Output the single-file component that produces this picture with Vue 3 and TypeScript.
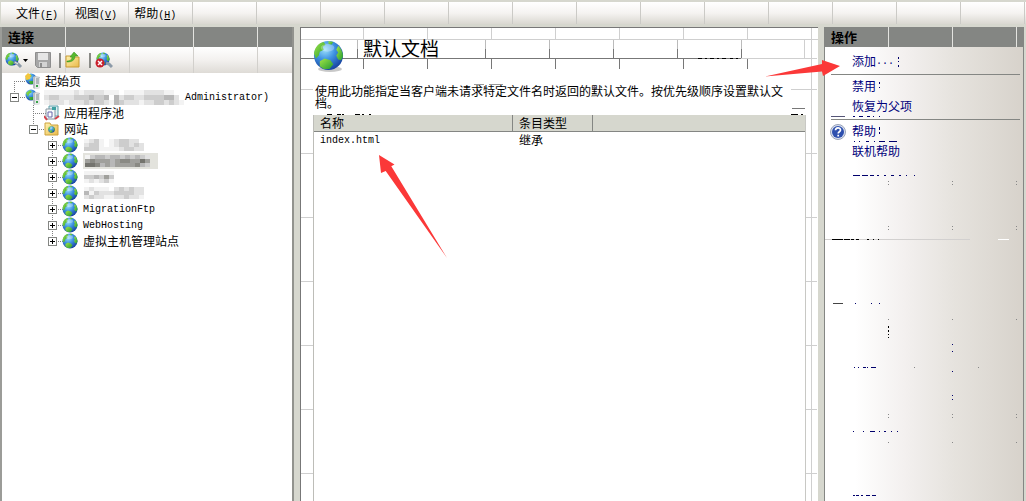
<script setup lang="ts">
interface Menu { label: string; key: string }
interface Site { name: string; mosaic: string[]; selected?: boolean }
interface Dash { x: number; y: number; w: number; h?: number; tone?: string }

const menus: Menu[] = [
  { label: '文件', key: 'F' },
  { label: '视图', key: 'V' },
  { label: '帮助', key: 'H' },
]

/* Each digit is the darkness of one 5px cell of a redacted name. */
const serverMosaic = [
  '1111112122221110111122221100',
  '2332223334334042332233334420',
  '1222122232332143222122332321',
]

const sites: Site[] = [
  { name: '', mosaic: ['123101233220', '233101233232', '333111123322'] },
  { name: '', selected: true, mosaic: ['1344344343432', '5655545665575', '7764545555643'] },
  { name: '', mosaic: ['111111', '334353', '121231'] },
  { name: '', mosaic: ['121110232322', '413222333322', '232211223221'] },
  { name: 'MigrationFtp', mosaic: [] },
  { name: 'WebHosting', mosaic: [] },
  { name: '虚拟主机管理站点', mosaic: [] },
]

const tones = ['#ffffff', '#f3f3f3', '#e2e2e2', '#cdcdcd', '#b8b8b8', '#a0a09c', '#8a8a84', '#74746e']

const centerTicks = [89, 153, 217, 281, 345, 409, 473]
const topTicks = [62, 126, 190, 254, 318, 382, 446]
const boxTicks = [56, 184, 248, 312, 376, 440]

const centerDashes: Dash[] = [
  { x: 397, y: 30, w: 4 }, { x: 404, y: 30, w: 2 }, { x: 409, y: 30, w: 4 }, { x: 416, y: 30, w: 2 },
  { x: 421, y: 30, w: 4 }, { x: 429, y: 30, w: 3 }, { x: 435, y: 30, w: 2 },
  { x: 26, y: 86, w: 5 }, { x: 36, y: 86, w: 4 }, { x: 41, y: 86, w: 2 }, { x: 54, y: 86, w: 5 },
  { x: 61, y: 86, w: 2 }, { x: 68, y: 86, w: 2 }, { x: 490, y: 86, w: 7 }, { x: 500, y: 86, w: 2 },
  { x: 173, y: 56, w: 10, tone: '#999' }, { x: 188, y: 56, w: 14, tone: '#999' },
]

const actionDashes: Dash[] = [
  { x: 73, y: 10, w: 1, h: 2 }, { x: 73, y: 14, w: 1, h: 1 }, { x: 73, y: 18, w: 1, h: 2 },
  { x: 54, y: 35, w: 1, h: 2 }, { x: 54, y: 40, w: 1, h: 1 },
  { x: 54, y: 80, w: 1, h: 3 }, { x: 54, y: 85, w: 1, h: 2 },
  { x: 6, y: 69, w: 14, tone: '#557' }, { x: 28, y: 69, w: 2 }, { x: 34, y: 69, w: 4 }, { x: 42, y: 69, w: 3 },
  { x: 48, y: 69, w: 1 }, { x: 54, y: 69, w: 1 },
  { x: 29, y: 94, w: 1 }, { x: 34, y: 94, w: 1 }, { x: 41, y: 94, w: 3 }, { x: 49, y: 94, w: 1 },
  { x: 54, y: 94, w: 6 }, { x: 64, y: 94, w: 8 },
  { x: 28, y: 128, w: 7 }, { x: 37, y: 128, w: 6 }, { x: 45, y: 128, w: 4 }, { x: 52, y: 128, w: 2 },
  { x: 59, y: 128, w: 2 }, { x: 66, y: 128, w: 3 }, { x: 74, y: 128, w: 2 }, { x: 81, y: 128, w: 1 }, { x: 89, y: 128, w: 1 },
  { x: 7, y: 192, w: 11, tone: '#000' }, { x: 19, y: 192, w: 6, tone: '#000' }, { x: 26, y: 192, w: 3, tone: '#000' },
  { x: 31, y: 192, w: 3, tone: '#000' }, { x: 42, y: 192, w: 2, tone: '#000' }, { x: 48, y: 192, w: 1, tone: '#000' }, { x: 53, y: 192, w: 1, tone: '#000' },
  { x: 173, y: 192, w: 11, tone: '#fff' },
  { x: 8, y: 256, w: 10, tone: '#444' }, { x: 30, y: 256, w: 1 }, { x: 46, y: 256, w: 1 }, { x: 54, y: 256, w: 1 },
  { x: 63, y: 279, w: 1, h: 2, tone: '#000' }, { x: 63, y: 283, w: 1, h: 2, tone: '#000' }, { x: 63, y: 287, w: 1, h: 1, tone: '#000' }, { x: 63, y: 290, w: 1, h: 1, tone: '#000' },
  { x: 127, y: 297, w: 1 }, { x: 127, y: 304, w: 1 }, { x: 127, y: 324, w: 1 }, { x: 127, y: 348, w: 1 }, { x: 127, y: 352, w: 1 },
  { x: 29, y: 320, w: 1 }, { x: 33, y: 320, w: 1 }, { x: 38, y: 320, w: 3 }, { x: 42, y: 320, w: 1 }, { x: 46, y: 320, w: 5 },
  { x: 89, y: 320, w: 1, tone: '#888' }, { x: 153, y: 320, w: 1, tone: '#888' },
  { x: 28, y: 384, w: 1 }, { x: 38, y: 384, w: 1 }, { x: 45, y: 384, w: 5 }, { x: 54, y: 384, w: 1 }, { x: 59, y: 384, w: 2 }, { x: 66, y: 384, w: 1 }, { x: 72, y: 384, w: 1 },
  { x: 28, y: 448, w: 2 }, { x: 31, y: 448, w: 3 }, { x: 36, y: 448, w: 2 }, { x: 41, y: 448, w: 4 }, { x: 47, y: 448, w: 4 },
]
const speckColumns = [63, 127, 191]
const speckRows = [134, 137, 179, 182, 272, 367, 370, 395]
</script>

<template>
  <div class="app">
    <svg class="defs" width="0" height="0" aria-hidden="true">
      <defs>
        <radialGradient id="sea" cx="38%" cy="30%" r="75%">
          <stop offset="0" stop-color="#9be0fc" />
          <stop offset="0.45" stop-color="#3f93e2" />
          <stop offset="1" stop-color="#143c9c" />
        </radialGradient>
        <linearGradient id="land" x1="0" y1="0" x2="1" y2="1">
          <stop offset="0" stop-color="#a4e646" />
          <stop offset="1" stop-color="#219a32" />
        </linearGradient>
        <linearGradient id="folder" x1="0" y1="0" x2="1" y2="1">
          <stop offset="0" stop-color="#fff3b0" />
          <stop offset="1" stop-color="#e9b94a" />
        </linearGradient>
        <symbol id="globe" viewBox="0 0 32 32">
          <circle cx="16" cy="16" r="15" fill="url(#sea)" />
          <path d="M1 14C2 7 6 3 11 2l2 3-3 2 1 3-4 2-1 4-3 3z" fill="url(#land)" />
          <path d="M16 1l5 1-2 3-3-1z" fill="url(#land)" />
          <path d="M26 6c3 3 5 7 5 11l-2 4-3-1-2-4 2-3-2-3z" fill="url(#land)" />
          <path d="M7 22l5-3 6 2 3 4-4 5-6 0-4-3z" fill="url(#land)" />
          <ellipse cx="15" cy="8" rx="7" ry="4" fill="#fff" opacity="0.28" />
        </symbol>
        <symbol id="server" viewBox="0 0 16 16">
          <circle cx="6" cy="6" r="5.5" fill="url(#sea)" />
          <path d="M1 4l4-3 2 2-3 2-1 3z M4 8l4 0 0 3-3 0z" fill="url(#land)" />
          <path d="M8 4l2-1 5 1v11l-5 1-2-1z" fill="#b9c0c4" />
          <path d="M10 4l5 1v10l-5 1z" fill="#e5e8e8" />
          <path d="M11 6h3M11 8h3M11 10h3" stroke="#7d898f" />
          <path d="M11 13h2" stroke="#39a34a" stroke-width="2" />
        </symbol>
      </defs>
    </svg>

    <nav class="menubar" aria-label="主菜单">
      <button v-for="m in menus" :key="m.key" type="button">{{ m.label }}<span class="latin">(<u>{{ m.key }}</u>)</span></button>
    </nav>

    <div class="main">
      <section class="connections">
        <h2 class="bar">连接</h2>
        <div class="toolbar">
          <button type="button" class="tool wide" aria-label="连接">
            <svg width="24" height="18" viewBox="0 0 24 18">
              <use href="#globe" x="0" y="1" width="14" height="14" />
              <path d="M9 11l4 2 3 3" stroke="#8c9aa8" stroke-width="3" fill="none" />
              <path d="M10 11l3 2" stroke="#dfe6ec" fill="none" />
              <path d="M18 8h5l-2.5 3z" fill="#000" />
            </svg>
          </button>
          <button type="button" class="tool" aria-label="保存">
            <svg width="16" height="16" viewBox="0 0 16 16">
              <path d="M0.500 0.500h15v15h-13l-2-2z" fill="#a6a6a6" stroke="#8e8e8e" />
              <path d="M3 1h10v7H3z" fill="#e6e6e6" />
              <path d="M4 10h8v5H4z" fill="#d4d4d4" />
              <path d="M5 11h2v4H5z" fill="#8e8e8e" />
            </svg>
          </button>
          <i class="sep" />
          <button type="button" class="tool" aria-label="上移">
            <svg width="16" height="16" viewBox="0 0 16 16">
              <path d="M1 4h5l1 1h7v10H1z" fill="url(#folder)" stroke="#c99a33" />
              <path d="M2 9c3 0 5-1 5-4H5l4-5 4 4h-3c0 4-3 6-8 6z" fill="#58b82e" stroke="#2f8c1a" stroke-width="0.500" />
            </svg>
          </button>
          <i class="sep" />
          <button type="button" class="tool" aria-label="断开连接">
            <svg width="18" height="18" viewBox="0 0 18 18">
              <use href="#globe" x="1" y="1" width="14" height="14" />
              <path d="M11 12l3 1 3 3" stroke="#8c9aa8" stroke-width="3" fill="none" />
              <circle cx="5" cy="12" r="4.500" fill="#c9202c" />
              <path d="M3 10l4 4M7 10l-4 4" stroke="#fff" stroke-width="1.500" />
            </svg>
          </button>
        </div>

        <div class="tree">
          <svg class="guides" width="70" height="180" aria-hidden="true">
            <path
              d="M12.500 8V24M12 8.500H24M18 24.500H24M31.500 32V56M31 40.500H44M37 56.500H44M50.500 64V168M56 72.500H61M56 88.500H61M56 104.500H61M56 120.500H61M56 136.500H61M56 152.500H61M56 168.500H61"
              fill="none" stroke="#808080" stroke-dasharray="1 1"
            />
          </svg>
          <ul>
            <li class="row depth1">
              <svg width="16" height="16" viewBox="0 0 16 16">
                <use href="#server" x="0" y="0" width="16" height="16" />
                <path d="M0 3l3-3 3 2-1 4-4 1z" fill="#f2c63c" />
              </svg>
              <span>起始页</span>
            </li>
            <li class="row depth1">
              <button type="button" class="expander" aria-label="折叠"><svg width="9" height="9"><path d="M2 4.500h5" stroke="#000" /></svg></button>
              <svg width="16" height="16"><use href="#server" width="16" height="16" /></svg>
              <svg class="mosaic" width="140" height="15" aria-hidden="true">
                <g v-for="(line, r) in serverMosaic" :key="r">
                  <rect v-for="(c, i) in line.split('')" :key="i" :x="i * 5" :y="r * 5" width="5" height="5" :fill="tones[Number(c)]" />
                </g>
              </svg>
              <span class="latin tail">Administrator)</span>
            </li>
            <li class="row depth2">
              <svg width="16" height="16" viewBox="0 0 16 16">
                <path d="M5 1h9v10H5z" fill="#dff0f4" stroke="#5f9ea8" />
                <path d="M2 4h9v10H2z" fill="#f6fafb" stroke="#8695a0" />
                <path d="M4 7h4v5H4z" fill="#fff" stroke="#66a" />
                <path d="M0 11l3 4M11 14l4-3" stroke="#d2434c" stroke-width="2" />
                <path d="M8 2h4v3H8z" fill="#3da0a0" />
              </svg>
              <span>应用程序池</span>
            </li>
            <li class="row depth2">
              <button type="button" class="expander" aria-label="折叠"><svg width="9" height="9"><path d="M2 4.500h5" stroke="#000" /></svg></button>
              <svg width="16" height="16" viewBox="0 0 16 16">
                <path d="M1 2h5l1 2h7v10H1z" fill="url(#folder)" stroke="#cda23c" />
                <use href="#globe" x="4" y="5" width="7" height="7" />
              </svg>
              <span>网站</span>
            </li>
            <li v-for="(s, n) in sites" :key="n" class="row depth3">
              <button type="button" class="expander" aria-label="展开"><svg width="9" height="9"><path d="M2 4.500h5M4.500 2v5" stroke="#000" /></svg></button>
              <svg width="16" height="16"><use href="#globe" width="16" height="16" /></svg>
              <span v-if="s.name" :class="{ latin: n < 6 }">{{ s.name }}</span>
              <span v-else class="hidden-name" :class="{ selected: s.selected }">
                <svg :width="(s.mosaic[0] ?? '').length * 5" height="12" :viewBox="`0 0 ${(s.mosaic[0] ?? '').length} 3`" preserveAspectRatio="none" shape-rendering="crispEdges" aria-hidden="true">
                  <g v-for="(line, r) in s.mosaic" :key="r">
                    <rect v-for="(c, i) in line.split('')" :key="i" :x="i" :y="r" width="1" height="1" :fill="tones[Number(c)]" />
                  </g>
                </svg>
              </span>
            </li>
          </ul>
        </div>
      </section>

      <main class="feature">
        <svg class="lines" width="100%" height="100%" aria-hidden="true" shape-rendering="crispEdges">
          <g fill="#cfcfcf">
            <rect x="0" y="11" width="100%" height="1" />
            <rect x="510" y="0" width="1" height="100%" />
            <rect x="503" y="11" width="1" height="20" />
            <rect x="440" y="30" width="76" height="1" />
            <rect v-for="x in topTicks" :key="x" :x="x" y="0" width="1" height="11" />
            <rect v-for="y in centerTicks" :key="y" x="503" :y="y + 36" width="13" height="1" />
            <rect v-for="y in centerTicks" :key="-y" x="0" :y="y + 36" width="12" height="1" />
            <rect x="490" y="61" width="26" height="1" />
            <rect x="0" y="61" width="12" height="1" />
          </g>
          <g fill="#777">
            <rect x="0" y="30" width="440" height="1" />
            <rect v-for="x in topTicks" :key="x" :x="x" y="31" width="1" height="10" />
            <rect v-for="x in boxTicks" :key="x" :x="x" y="20" width="1" height="10" />
            <rect x="491" y="80" width="13" height="1" />
          </g>
          <g fill="#bbb">
            <rect v-for="x in boxTicks" :key="x" :x="x" y="12" width="1" height="9" />
          </g>
          <rect v-for="(d, i) in centerDashes" :key="i" :x="d.x" :y="d.y" :width="d.w" height="1" :fill="d.tone ?? '#000'" />
        </svg>

        <header class="title">
          <svg width="32" height="32" viewBox="0 0 32 32">
            <ellipse cx="17" cy="29" rx="12" ry="3" fill="#c8c8c8" />
            <use href="#globe" x="0" y="0" width="31" height="31" />
          </svg>
          <h1>默认文档</h1>
        </header>
        <p class="intro">使用此功能指定当客户端未请求特定文件名时返回的默认文件。按优先级顺序设置默认文档。</p>
        <div class="list">
          <table>
            <colgroup><col class="c-name" /><col class="c-type" /><col /></colgroup>
            <thead><tr><th>名称</th><th>条目类型</th><th aria-label="空列" /></tr></thead>
            <tbody><tr><td class="latin">index.html</td><td>继承</td><td /></tr></tbody>
          </table>
        </div>
        <svg class="arrow row-arrow" width="70" height="105" viewBox="378 154 70 105" aria-hidden="true">
          <path d="M379 155L394.500 164.500L391.300 166.300L447 258L385.700 171L381 173Z" fill="#fb3838" />
        </svg>
      </main>

      <aside class="actions">
        <h2 class="bar">操作</h2>
        <div class="panel">
          <svg class="lines" width="100%" height="100%" aria-hidden="true" shape-rendering="crispEdges">
            <rect x="0" y="192" width="145" height="1" fill="#d2d0cf" />
            <g v-for="x in speckColumns" :key="x" fill="#888">
              <rect v-for="y in speckRows" :key="y" :x="x" :y="y" width="1" height="1" />
            </g>
            <rect v-for="(d, i) in actionDashes" :key="i" :x="d.x" :y="d.y" :width="d.w" :height="d.h ?? 1" :fill="d.tone ?? '#00006c'" />
          </svg>
          <a href="#add">添加<span class="latin">...</span></a>
          <hr />
          <a href="#disable">禁用</a>
          <a href="#revert">恢复为父项</a>
          <hr />
          <a href="#help" class="with-icon">
            <svg width="16" height="16" viewBox="0 0 16 16" aria-hidden="true">
              <circle cx="8" cy="8" r="7.500" fill="#d9e0f0" stroke="#98a2b8" />
              <circle cx="8" cy="8" r="6" fill="#2d4fae" />
              <path d="M5.500 6.300c0-3.300 5-3.300 5-.3 0 1.800-2.300 1.600-2.300 3.500M8.200 10.800v1.700" fill="none" stroke="#fff" stroke-width="1.700" />
            </svg>
            帮助
          </a>
          <a href="#online">联机帮助</a>
        </div>
        <svg class="arrow add-arrow" width="76" height="20" viewBox="765 58 76 20" aria-hidden="true">
          <path d="M765 76.500L822 64L822 60L840 66L823 76L822 71.500Z" fill="#fb3838" />
        </svg>
      </aside>
    </div>
  </div>
</template>

<style>
body {
  margin: 0;
  background: #d6d7ce;
}
</style>

<style scoped>
.app {
  display: flex;
  flex-direction: column;
  min-height: 100vh;
  background: #d6d7ce;
  color: #000;
  font: 12px/16px "Liberation Sans", "Noto Sans CJK SC", sans-serif;
}
.defs { position: absolute; }
.latin { font-family: "Liberation Mono", monospace; font-size: 10px; }
button { font: inherit; color: inherit; padding: 0; border: 0; background: none; }
h1, h2, p, ul { margin: 0; padding: 0; font-weight: normal; }
ul { list-style: none; }
svg { display: block; flex: none; }

.menubar {
  display: flex;
  gap: 17px;
  height: 22px;
  margin: 2px 0 3px 1px;
  padding-left: 15px;
  background:
    repeating-linear-gradient(90deg, transparent 0 63px, #cbcac6 63px 64px),
    linear-gradient(#fff, #f5f3f1 50%, #dad8d1);
}
.menubar button { height: 24px; line-height: 24px; white-space: nowrap; }

.main {
  flex: 1;
  display: grid;
  grid-template-columns: 294px minmax(0, 1fr) 200px;
  column-gap: 6px;
  padding-right: 2px;
}
.bar {
  height: 20px;
  padding-left: 6px;
  font-size: 13px;
  line-height: 22px;
  font-weight: bold;
  background: repeating-linear-gradient(90deg, transparent 0 63px, #e4e4e0 63px 64px), #848683;
}

.connections {
  box-sizing: border-box;
  border-left: 2px solid #9b9c98;
  border-right: 2px solid #92938e;
  background: #fff;
}
.toolbar {
  display: flex;
  align-items: center;
  height: 26px;
  padding-left: 3px;
  background:
    repeating-linear-gradient(90deg, transparent 0 63px, #d2d0cc 63px 64px),
    linear-gradient(#fff, #f3f1ef 50%, #dedbd6);
}
.tool.wide { margin-right: 6px; }
.sep { width: 2px; height: 15px; margin: 0 4px 0 8px; background: #8a8a86; }

.tree { position: relative; }
.guides { position: absolute; left: 0; top: 0; }
.row { position: relative; display: flex; align-items: center; height: 16px; white-space: nowrap; }
.row > span { margin-left: 4px; line-height: 18px; padding-top: 2px; }
.row > svg { z-index: 1; }
.depth1 { padding-left: 23px; }
.depth2 { padding-left: 42px; }
.depth3 { padding-left: 60px; }
.depth3 > span { margin-left: 5px; }
.expander {
  position: absolute;
  left: 8px;
  width: 9px;
  height: 9px;
  background: #fff;
  outline: 1px solid #848683;
  outline-offset: -1px;
}
.depth2 .expander { left: 27px; }
.depth3 .expander { left: 46px; }
.row > .mosaic { margin-left: 3px; }
.row > .tail { margin-left: 1px; }
.row > .hidden-name { padding: 1px; }
.row > .selected { padding: 2px 8px 2px 2px; background: #e3e3dd; }

.feature {
  position: relative;
  display: flex;
  flex-direction: column;
  border-left: 1px solid #777;
  border-top: 1px solid #777;
  background: #fff;
}
.lines { position: absolute; left: 0; top: 0; pointer-events: none; }
.title {
  position: relative;
  display: flex;
  align-items: flex-start;
  gap: 18px;
  padding: 12px 12px 0;
}
.title h1 { font-size: 19px; line-height: 20px; }
.intro { position: relative; margin: 14px 30px 0 14px; line-height: 12px; }
.list {
  position: relative;
  flex: 1;
  margin: 5px 12px 0;
  border-left: 1px solid #bdbdb8;
  border-right: 1px solid #c8c8c4;
  background: #fff;
}
table { width: 100%; table-layout: fixed; border-collapse: separate; border-spacing: 0; }
.c-name { width: 199px; }
.c-type { width: 80px; }
th {
  box-sizing: border-box;
  height: 17px;
  padding: 2px 0 0 6px;
  text-align: left;
  font-weight: normal;
  line-height: 14px;
  background: #d6d7ce;
  border-bottom: 1px solid #848683;
}
th:not(:last-child) { border-right: 1px solid #848683; }
td { height: 18px; padding: 0 0 0 6px; line-height: 18px; }

.arrow { position: absolute; z-index: 2; pointer-events: none; }
.row-arrow { left: 77px; top: 126px; }

.actions {
  position: relative;
  display: flex;
  flex-direction: column;
  box-sizing: border-box;
  border-left: 1px solid #848683;
  border-right: 1px solid #848683;
}
.panel {
  position: relative;
  flex: 1;
  padding-top: 5px;
  background: linear-gradient(90deg, #fff 0 15%, #f3f0ef 40%, #e6e3de 65%, #d7d2cb);
}
.panel a {
  position: relative;
  display: flex;
  align-items: center;
  height: 20px;
  padding-left: 27px;
  line-height: 20px;
  color: #00007b;
  text-decoration: none;
}
.panel a.with-icon { padding-left: 5px; gap: 6px; }
.panel hr { position: relative; height: 1px; margin: 2px 3px 2px 6px; border: 0; background: #848683; }
.add-arrow { left: -60px; top: 31px; }
</style>
